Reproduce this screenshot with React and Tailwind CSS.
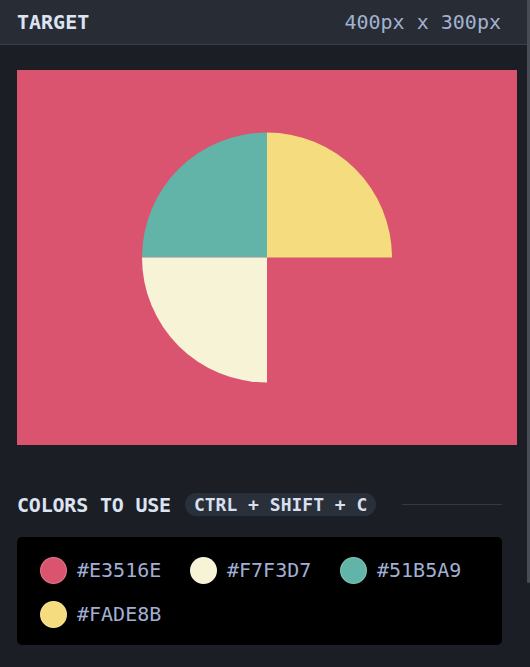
import React from "react";

const colors = [
  { hex: "#E3516E", fill: "#da5470" },
  { hex: "#F7F3D7", fill: "#f7f3d7" },
  { hex: "#51B5A9", fill: "#62b4a8" },
  { hex: "#FADE8B", fill: "#f5dc7e" },
];

export default function App() {
  return (
    <div
      className="flex h-[667px] w-[530px] overflow-hidden bg-[#1b1e25]"
      style={{ fontFamily: '"DejaVu Sans Mono", "Liberation Mono", monospace' }}
    >
      <div className="flex min-w-0 flex-1 flex-col">
        <div className="flex h-[45px] shrink-0 items-center justify-between border-b border-[#39404a] bg-[#282d35] pl-[17px] pr-[26px]">
          <span className="text-[20px] font-bold text-[#dce3f3]">TARGET</span>
          <span className="text-[20px] text-[#a2b2d0]">400px x 300px</span>
        </div>

        <div className="flex flex-col pl-[17px] pr-[25px]">
          <div className="mt-[25px] h-[375px] w-[500px] shrink-0">
            <svg width="500" height="375" viewBox="0 0 400 300" className="block">
              <rect x="0" y="0" width="400" height="300" fill="#da5470" />
              <path d="M200 150 L200 50 A100 100 0 0 1 300 150 Z" fill="#f5dc7e" />
              <path d="M200 150 L100 150 A100 100 0 0 1 200 50 Z" fill="#62b4a8" />
              <path d="M200 150 L200 250 A100 100 0 0 1 100 150 Z" fill="#f7f3d7" />
            </svg>
          </div>

          <div className="mt-[48px] flex h-[23px] items-center">
            <span className="text-[20px] font-bold tracking-[-0.2px] text-[#dce3f3]">COLORS TO USE</span>
            <span className="ml-[14px] flex h-[23px] items-center rounded-full bg-[#2a303a] px-[9px] text-[18px] font-bold text-[#d8dfee]">
              CTRL + SHIFT + C
            </span>
            <div className="ml-[26px] h-px flex-1 bg-[#343a44]" />
          </div>

          <div className="mt-[21px] rounded-[5px] bg-black pb-[17px] pl-[23px] pr-[10px] pt-[20px]">
            <div className="flex flex-wrap gap-y-[17px]">
              {colors.map((c) => (
                <div key={c.hex} className="flex w-[150px] items-center gap-[10px]">
                  <span
                    className="block h-[27px] w-[27px] shrink-0 rounded-full border border-white/20"
                    style={{ backgroundColor: c.fill }}
                  />
                  <span className="text-[20px] leading-[27px] text-[#a0b0d4]">{c.hex}</span>
                </div>
              ))}
            </div>
          </div>
        </div>
      </div>
      <div className="flex w-[3px] shrink-0 flex-col">
        <div className="h-[583px] rounded-b-[2px] bg-[#484d55]" />
      </div>
    </div>
  );
}
